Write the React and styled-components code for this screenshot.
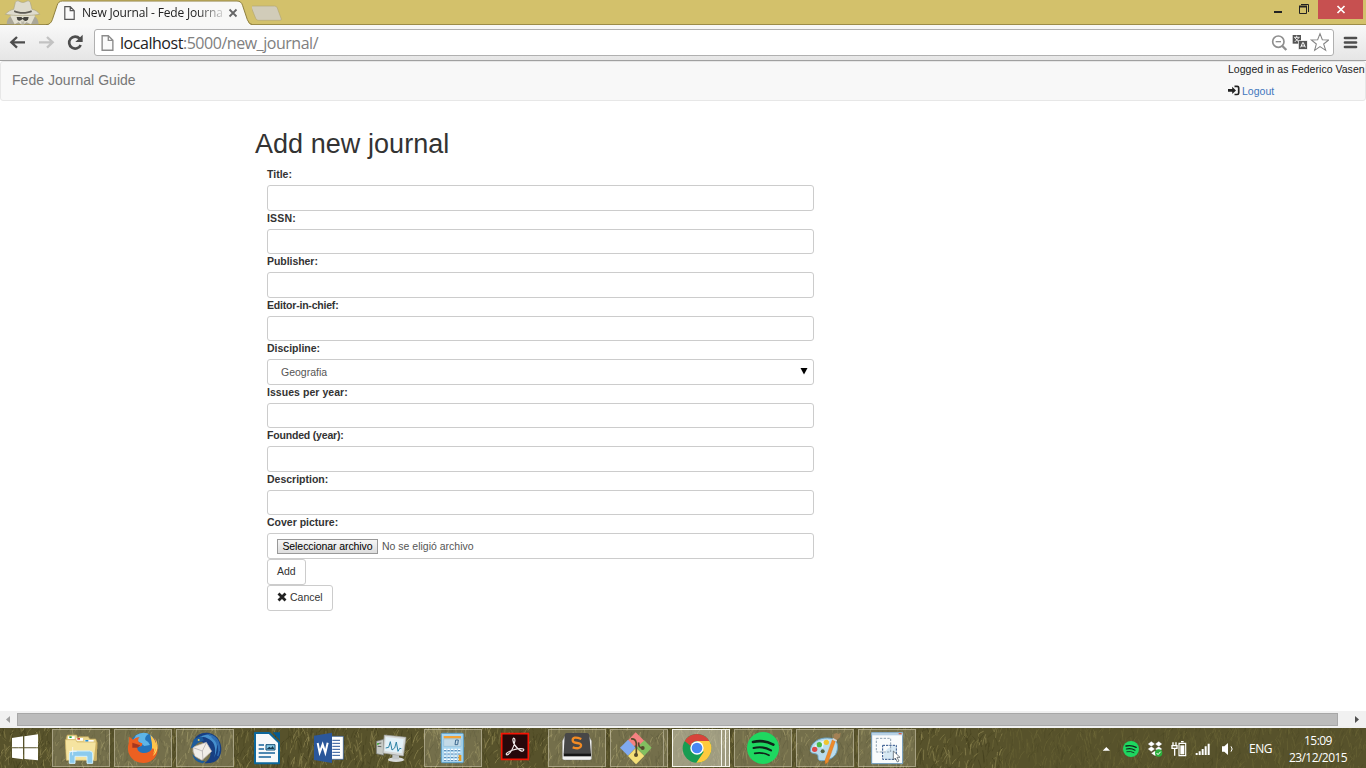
import React from "react";
import styled, { createGlobalStyle } from "styled-components";

const GlobalStyle = createGlobalStyle`
  *, *::before, *::after { box-sizing: border-box; }
  html, body { margin: 0; padding: 0; }
  body { overflow: hidden; background: #fff; }
  svg { display: block; flex: none; }
`;

const UI_FONT = `"Open Sans", "Noto Sans", sans-serif`;

const Desktop = styled.div`
  width: 1366px;
  height: 768px;
  display: flex;
  flex-direction: column;
  overflow: hidden;
  font-family: "Liberation Sans", Arial, sans-serif;
  font-size: 10.5px;
  line-height: 15px;
  color: #333;
`;

/* ---------- browser frame ---------- */

const TabStrip = styled.header`
  height: 25px;
  flex: none;
  display: flex;
  align-items: flex-start;
  background: #d3c16b;
  box-shadow: inset 0 -1px #9c8c48;
`;

const Tab = styled.div`
  position: relative;
  width: 206px;
  height: 25px;
  display: flex;
  align-items: center;
  padding: 1px 0 0 18px;
`;

const TabShape = styled.svg`
  position: absolute;
  left: 0;
  top: 0;
`;

const TabTitle = styled.span`
  position: relative;
  width: 141px;
  margin: 0 5px 0 7px;
  white-space: nowrap;
  font: 12px/18px ${UI_FONT};
  letter-spacing: -0.17px;
  color: #222;
  -webkit-mask-image: linear-gradient(90deg, #000 115px, rgba(0, 0, 0, 0.2) 140px);
  mask-image: linear-gradient(90deg, #000 115px, rgba(0, 0, 0, 0.2) 140px);
`;

const Above = styled.span`
  position: relative;
`;

const WindowButtons = styled.div`
  margin-left: auto;
  display: flex;
`;

const Toolbar = styled.div`
  height: 36px;
  flex: none;
  display: flex;
  align-items: center;
  background: linear-gradient(#f8f8f8, #e6e6e6);
  border-bottom: 1px solid #a0a0a0;
`;

const AddressBar = styled.div`
  width: 1240px;
  height: 27px;
  display: flex;
  align-items: center;
  padding: 0 4px 0 6px;
  background: #fff;
  border: 1px solid #b0b0b0;
  border-radius: 3px;
`;

const Url = styled.span`
  margin-left: 6px;
  flex: 1;
  font: 16px/22px ${UI_FONT};
  letter-spacing: -0.46px;
  color: #808080;
  b { font-weight: 400; color: #222; }
`;

/* ---------- page ---------- */

const Page = styled.main`
  flex: 1;
  background: #fff;
`;

const Navbar = styled.nav`
  height: 40px;
  display: flex;
  justify-content: space-between;
  background: #f8f8f8;
  border: 1px solid #e7e7e7;
  border-radius: 3px;
`;

const Brand = styled.span`
  padding: 10px 0 0 11px;
  font-size: 14px;
  line-height: 16px;
  letter-spacing: 0.04px;
  color: #777;
`;

const Account = styled.div`
  width: 137px;
  white-space: nowrap;
  letter-spacing: 0.03px;
  color: #222;
`;

const Logout = styled.a`
  display: flex;
  align-items: center;
  gap: 2px;
  margin-top: 7px;
  color: #3f76bd;
`;

const LogoutIcon = styled.svg`
  margin-bottom: 2px;
`;

const Content = styled.section`
  width: 559px;
  margin: 28px 0 0 255px;
`;

const Heading = styled.h1`
  margin: 0 0 7px;
  font-size: 27px;
  line-height: 31px;
  font-weight: 400;
  letter-spacing: 0.05px;
  white-space: nowrap;
  color: #333;
`;

const Form = styled.form`
  display: flex;
  flex-direction: column;
  align-items: flex-start;
  padding-left: 12px;
`;

const Field = styled.div`
  width: 547px;
  height: 43.5px;
`;

const Label = styled.label`
  display: block;
  height: 18px;
  font-weight: 700;
  letter-spacing: ${(p) => p.$spacing || 0}px;
`;

const Control = styled.div`
  width: 547px;
  height: 25.5px;
  display: flex;
  align-items: center;
  padding: 1px 5px 0 ${(p) => p.$indent || 9}px;
  background: #fff;
  border: 1px solid #ccc;
  border-radius: 3px;
  color: #555;
`;

const FileButton = styled.span`
  width: 101px;
  height: 15px;
  margin-right: 4px;
  border: 1px solid #999;
  background: linear-gradient(#f6f6f6, #ddd);
  color: #000;
  line-height: 13px;
  letter-spacing: -0.08px;
  text-align: center;
  white-space: nowrap;
`;

const SelectArrow = styled.svg`
  margin-left: auto;
`;

const Button = styled.button`
  width: ${(p) => p.$width}px;
  height: 26px;
  display: flex;
  align-items: center;
  gap: 3px;
  padding: 0 9px;
  border: 1px solid #ccc;
  border-radius: 3px;
  background: #fff;
  font: inherit;
  color: #333;
`;

const ScrollBar = styled.div`
  height: 17px;
  flex: none;
  display: flex;
  align-items: center;
  justify-content: space-between;
  background: #f1f1f1;
`;

const Thumb = styled.div`
  width: 1321px;
  height: 13px;
  background: #bcbcbc;
  border: 1px solid #a8a8a8;
`;

/* ---------- taskbar ---------- */

const Taskbar = styled.footer`
  position: relative;
  height: 40px;
  flex: none;
  display: flex;
  align-items: center;
  background: #57522b;
`;

const GrassArt = styled.svg`
  position: absolute;
  inset: 0;
`;

const Tasks = styled.div`
  position: relative;
  display: flex;
  gap: 4px;
`;

const FRAME = {
  open: "background: rgba(205,200,170,.25); border-color: rgba(215,210,185,.5);",
  active: "background: rgba(220,218,200,.55); border-color: #f4f4ea;",
};

const Task = styled.div`
  position: relative;
  width: 58px;
  height: 38px;
  display: flex;
`;

const TaskFrame = styled.div`
  height: 38px;
  width: ${(p) => p.$width || 58}px;
  flex: none;
  border: 1px solid transparent;
  ${(p) => FRAME[p.$state] || ""}
`;

const StackEdge = styled(TaskFrame)`
  width: ${(p) => p.$width}px;
  border-left: 0;
`;

const TaskIcon = styled.svg`
  position: absolute;
  left: 0;
  top: 0;
`;

const Tray = styled.div`
  position: relative;
  margin-left: auto;
  display: flex;
  align-items: center;
  color: #fff;
  font: 12px/17px ${UI_FONT};
`;

const Language = styled.span`
  width: 37px;
  margin-left: 9px;
  letter-spacing: -0.5px;
`;

const Clock = styled.div`
  width: 64px;
  margin: 1px 16px 0 0;
  text-align: center;
  letter-spacing: -0.55px;
  white-space: nowrap;
`;

/* ---------- drawings ---------- */

const Incognito = () => (
  <svg width="46" height="25" viewBox="0 0 138 75">
    <path d="M20 73c0-12 5-20 12-25l35 8 36-8c8 5 12 13 13 25z" fill="#aaa798" />
    <path d="M31 48l5-13h63l6 13-12 25-14-7-7 7h-9l-7-7-12 7z" fill="#e2dfd0" />
    <path d="M50 51h14l4 4 4-4h14l-2 8c-5 5-12 5-15-1h-3c-4 6-11 5-14 1z" fill="#45443f" />
    <path d="M16 43c8-10 17-13 25-15l5-21c3-6 10-5 14-2 6 3 11 3 17 0 6-4 12-3 14 3l5 20c10 2 18 7 23 15-29 5-75 5-103 0z" fill="#dedbcd" stroke="#aaa584" strokeWidth="2" />
    <path d="M43 31c14 7 38 7 51 0l2 5c-16 7-40 7-54 0z" fill="#5d5b54" />
    <path d="M64 62l4 3 5-3v11h-9z" fill="#bab7a9" />
  </svg>
);

const PageIcon = ({ w = 11, h = 14, c = "#555" }) => (
  <svg width={w} height={h} viewBox="0 0 11 14" fill="#fafafa" stroke={c} strokeWidth="1.2">
    <path d="M.8.7h5.400l4 4v8.600H.8zM6.200.7v4h4" />
  </svg>
);

const NavIcons = () => (
  <svg width="94" height="35" viewBox="0 0 282 105" fill="none" strokeWidth="7">
    <path d="M75 52H35M51 36L34 52l17 16" stroke="#4d4d4d" />
    <path d="M117 52h40M141 36l17 16-17 16" stroke="#c2c2c2" />
    <path d="M239 41A18 18 0 1 0 242 60" stroke="#4d4d4d" strokeWidth="8" />
    <path d="M248 29v22h-22z" fill="#4d4d4d" />
  </svg>
);

const OmniboxIcons = () => (
  <svg width="60" height="25" viewBox="0 0 180 75" fill="none">
    <circle cx="28" cy="35" r="17" stroke="#8f8f8f" strokeWidth="5" />
    <path d="M40 48l12 12" stroke="#8f8f8f" strokeWidth="7" />
    <path d="M20 35h16" stroke="#8f8f8f" strokeWidth="4" />
    <rect x="71" y="15" width="25" height="26" fill="#555" />
    <path d="M75 22h17M83 17v5M78 24l11 12M89 24L77 36" stroke="#fff" strokeWidth="2.6" />
    <rect x="88" y="32" width="27" height="26" fill="#555" stroke="#fff" strokeWidth="2" />
    <path d="M95 52l6-14h2l6 14M97 48h10" stroke="#fff" strokeWidth="3" />
    <path d="M154 12l7 18 19 1-15 12 6 19-17-11-16 11 5-19-15-12 19-1z" transform="translate(-1 -1)" fill="#fff" stroke="#858585" strokeWidth="3.2" />
  </svg>
);

const CaptionButtons = () => (
  <svg width="103" height="19" viewBox="0 0 103 19">
    <path d="M11 12h8" stroke="#222" strokeWidth="2" />
    <path d="M36.500 6.500h7v7h-7zM38 4.500h7.500V12" fill="none" stroke="#222" />
    <path d="M36 6.500h8" stroke="#222" strokeWidth="2" />
    <rect x="55" width="45" height="19" fill="#c75050" />
    <path d="M74.500 6l7 7M81.500 6l-7 7" stroke="#fff" strokeWidth="1.700" />
  </svg>
);

const random = (() => {
  let seed = 90817;
  return () => {
    seed = (seed + 0x6d2b79f5) | 0;
    let t = Math.imul(seed ^ (seed >>> 15), 1 | seed);
    t = (t + Math.imul(t ^ (t >>> 7), 61 | t)) ^ t;
    return ((t ^ (t >>> 14)) >>> 0) / 4294967296;
  };
})();

const blades = Array.from({ length: 3000 }, () => {
  const x = random() * 1380 - 5;
  const y = random() * 50;
  const dim = x > 1000;
  const lean = (random() - 0.4) * 9;
  const len = 3 + random() * 9;
  const tones = dim ? ["#79733f", "#464321", "#6a6434"] : ["#948b55", "#413d1d", "#7d7643", "#4a4621"];
  return {
    d: `M${x.toFixed(1)} ${y.toFixed(1)}q${(lean * 0.2).toFixed(1)} ${(-len / 2).toFixed(1)} ${lean.toFixed(1)} ${(-len).toFixed(1)}`,
    c: tones[Math.floor(random() * tones.length)],
    o: (dim ? 0.4 : 0.45 + random() * 0.4).toFixed(2),
  };
});

const Grass = () => (
  <GrassArt width="1366" height="40" viewBox="0 0 1366 40" fill="none">
    {blades.map((b, i) => (
      <path key={i} d={b.d} stroke={b.c} strokeWidth="0.9" opacity={b.o} />
    ))}
  </GrassArt>
);

const SpotifyWaves = () => (
  <g fill="none" stroke="#10251a" strokeLinecap="round">
    <path d="M459 111q32-8 61 8" strokeWidth="8" />
    <path d="M461 129q28-7 52 7" strokeWidth="6.500" />
    <path d="M464 145q23-5 43 6" strokeWidth="5" />
  </g>
);

const ART = {
  explorer: {
    x: 156,
    art: (
      <>
        <path d="M199 98l3-8h28l3 9 5-4h27l4 7h18l4 11v20H198z" fill="#e8d48a" stroke="#c1a75a" strokeWidth="2" />
        <path d="M204 94h20v8h-20zM229 99h20v8h-20zM254 105h27v8h-27z" fill="#fff" />
        <path d="M208 94h7v5h-7z" fill="#1ea73b" /><path d="M232 99h8v5h-8z" fill="#d24131" /><path d="M256 105h9v5h-9z" fill="#258fcf" />
        <path d="M196 104h31l4 7h58v55h-90z" fill="#f5e4a0" stroke="#d1b768" strokeWidth="2" />
        <path d="M288 109l4 4-3 54h-8z" fill="#cdb163" />
        <path d="M208 175v-28q1-9 10-9h51q9 0 9 9v28h-17v-21h-36v21z" fill="#8ccbed" stroke="#d2f1ff" strokeWidth="3" />
        <path d="M218 126v25M207 139h23" stroke="#fff" strokeWidth="2" />
      </>
    ),
  },
  firefox: {
    x: 342,
    art: (
      <>
        <circle cx="430" cy="125" r="41" fill="#2474bb" />
        <path d="M408 91q19-13 38-4-13 8-10 18 10 4 14 15l-17 3-15-12-19-4z" fill="#5eb5e8" />
        <path d="M451 89c18 15 29 48 10 67-14 12-40 12-50-3 22 7 40-2 44-18 4-17-2-30-4-46z" fill="#ffc54b" />
        <path d="M461 95c22 30 15 77-31 79-32 0-53-28-44-59l2-20 11 9q8-8 20-8-8 8-2 16l10 3-2 8-14 4q2 16 18 17 20 1 29-14 8 2 1 17 12-14 10-31z" fill="#ec6021" />
        <path d="M464 99c9 15 5 40-6 54 16-7 20-37 6-54z" fill="#ffd45a" />
        <path d="M397 113l24 8-8 7-16 0z" fill="#a63720" />
      </>
    ),
  },
  thunderbird: {
    x: 528,
    art: (
      <>
        <path d="M581 111c5-23 29-31 48-26 34 7 44 52 27 75-10 14-27 15-44 15 20-13 24-28 15-47l-21-18z" fill="#173f83" />
        <path d="M588 107q17-17 34-7 31 12 21 58 14-36 3-56-10-16-28-13-18 2-30 18z" fill="#4690cd" />
        <path d="M635 95q31 25 18 58M627 90q34 7 31 48" fill="none" stroke="#2f6eb3" strokeWidth="4" />
        <path d="M579 126l40-14 16 27-29 27-21-12q-8-15-6-28z" fill="#f1ede7" stroke="#bcb4b1" strokeWidth="2" />
        <path d="M580 128l27 10 12-25M607 138l2 27" fill="none" stroke="#a8a3a4" strokeWidth="2" />
        <path d="M572 130l10-28 22-8 8 12-18 8-16 14zM577 146q15 22 39 23l-8 6q-28-5-31-29z" fill="#1e5c9b" />
        <circle cx="596" cy="105" r="3" fill="#dec867" />
      </>
    ),
  },
  writer: {
    x: 714,
    art: (
      <>
        <path d="M765 84h43l29 29v62h-72z" fill="#f7f9fa" stroke="#0d679b" strokeWidth="6" strokeLinejoin="round" />
        <path d="M818 82h22v24z" fill="#075b91" />
        <path d="M776 120h16M776 132h16M776 144h49M776 156h37" stroke="#17639a" strokeWidth="5" />
        <path d="M798 119h27v16h-27z" fill="#83c7e4" stroke="#155078" strokeWidth="3" /><path d="M800 132l8-7 5 4 5-6 5 9z" fill="#153a52" />
      </>
    ),
  },
  word: {
    x: 0,
    art: (
      <>
        <path d="M92 94h38v69H92z" fill="#fff" stroke="#2b579a" strokeWidth="2" />
        <path d="M97 106h23M97 115h23M97 124h23M97 133h23M97 142h23M97 151h23" stroke="#2b579a" strokeWidth="3" />
        <path d="M42 92l54-9v91l-54-9z" fill="#2b579a" />
        <path d="M53 114l6 29 9-25 8 25 7-30" fill="none" stroke="#fff" strokeWidth="6" />
      </>
    ),
  },
  monitor: {
    x: 186,
    art: (
      <>
        <path d="M229 109l22-6v48l-22-5z" fill="#c6c9c5" stroke="#6c706c" strokeWidth="2" />
        <path d="M233 116l11-2M233 124l11 1" stroke="#5e6662" strokeWidth="3" /><path d="M231 117h5" stroke="#41bc30" strokeWidth="4" />
        <ellipse cx="288" cy="164" rx="24" ry="7" fill="#d8dada" />
        <path d="M277 148h20v15h-20z" fill="#c2c6c7" />
        <path d="M253 90l65 7-8 56-61-9z" fill="#d8dad9" stroke="#9ea2a2" strokeWidth="2" />
        <path d="M257 96l54 6-6 43-51-7z" fill="#e3f1f8" />
        <path d="M257 129l9-2 5-17 5 25 8-6 5-18 5 28 5-9 5 1" fill="none" stroke="#2c82a5" strokeWidth="3" />
      </>
    ),
  },
  calculator: {
    x: 372,
    art: (
      <>
        <rect x="424" y="85" width="66" height="88" rx="3" fill="#a9d6f0" stroke="#5b9fca" strokeWidth="3" />
        <path d="M431 93h52v7h-52z" fill="#f2a236" /><path d="M431 102h52v22h-52z" fill="#c4dbe8" stroke="#79a5bc" />
        <path d="M467 105h8l-2 14h-8z" fill="none" stroke="#3d698f" strokeWidth="3" />
        {[135, 145, 155, 165].map((y) => <path key={y} d={`M432 ${y}h50`} stroke="#fff" strokeWidth="7" strokeDasharray="7 3.500" />)}
        {[137, 147, 157, 167].map((y) => <path key={y} d={`M432 ${y}h50`} stroke="#447cae" strokeWidth="3" strokeDasharray="7 3.500" />)}
        <path d="M476 150h8v18h-8z" fill="#e39b26" />
      </>
    ),
  },
  acrobat: {
    x: 558,
    art: (
      <>
        <path d="M605 86h80v77h-80z" fill="#26080a" stroke="#f31505" strokeWidth="5" />
        <path d="M621 150c-8-4 8-12 18-15 15-5 38-7 31 2-6 7-29-14-31-30-2-11 8-10 5 4-2 14-13 37-23 39z" fill="none" stroke="#f1eaea" strokeWidth="3.500" />
      </>
    ),
  },
  sublime: {
    x: 744,
    art: (
      <>
        <path d="M787 108l9-18h69l10 18v52q0 5-5 5h-78q-5 0-5-5z" fill="#f1f1f0" stroke="#666" strokeWidth="1" />
        <path d="M800 84h61q6 0 7 6l5 57H791l3-57q1-6 6-6z" fill="#474747" />
        <path d="M791 146h82v8h-82z" fill="#161616" />
        <path d="M844 102q-26-10-26 4 0 7 13 8 14 1 12 9-3 11-25 4" fill="none" stroke="#f28b24" strokeWidth="7" />
      </>
    ),
  },
  git: {
    x: 30,
    art: (
      <>
        <path d="M84 106l23-24 27 27-20 20-8-9-10 10-16-16z" fill="#f48181" />
        <path d="M60 128l24-24 23 24-23 24z" fill="#80aaf0" />
        <path d="M133 106l22 22-22 24-24-24z" fill="#82be60" />
        <path d="M84 153l24-25 25 25-25 25z" fill="#f4df77" />
        <path d="M93 102q14-2 16 13v34M116 112q-1 17 11 17" fill="none" stroke="#54482c" strokeWidth="5" />
        <circle cx="108" cy="150" r="6" fill="#54482c" /><circle cx="128" cy="129" r="6" fill="#54482c" />
      </>
    ),
  },
  chrome: {
    x: 216,
    art: (
      <>
        <circle cx="291" cy="130" r="43" fill="#179c52" />
        <path d="M291 108h37a43 43 0 0 1-39 65l22-32z" fill="#ffca3e" />
        <path d="M254 108a43 43 0 0 1 74 0h-37q-15 1-19 15z" fill="#d7443a" />
        <circle cx="291" cy="129" r="20" fill="#fff" /><circle cx="291" cy="129" r="16" fill="#4687f4" />
      </>
    ),
  },
  spotify: {
    x: 402,
    art: <><circle cx="489" cy="129" r="48" fill="#1ed760" /><SpotifyWaves /></>,
  },
  paint: {
    x: 588,
    art: (
      <>
        <path d="M632 130c5-20 28-32 50-31 28 0 32 16 30 34-3 24-26 35-49 34-16-1-3-16-14-20-13-3-21-2-17-17z" fill="#b9dced" stroke="#6aa2c4" strokeWidth="3" />
        <path d="M641 126q16-22 50-21-26 10-21 24-19-7-29-3z" fill="#e6f6fd" />
        <circle cx="644" cy="133" r="8" fill="#dc4b47" /><circle cx="658" cy="119" r="8" fill="#4cb949" /><circle cx="679" cy="112" r="8" fill="#f0c62f" /><circle cx="668" cy="139" r="6" fill="#566341" />
        <path d="M697 104l9 5-22 63-8 5-1-11z" fill="#ed8a2b" stroke="#c96b1b" />
        <path d="M700 103l1-16 9-3 5 3 7-4-2 14-10 9z" fill="#a48155" /><path d="M698 101l12 7" stroke="#d7d9d8" strokeWidth="5" />
      </>
    ),
  },
  snip: {
    x: 774,
    art: (
      <>
        <path d="M815 83h93v93h-93z" fill="#f9fbfc" stroke="#6e99bd" strokeWidth="3" />
        <path d="M815 83h93v8h-93z" fill="#b7d1e5" /><path d="M896 86h9" stroke="#d8614b" strokeWidth="4" />
        <path d="M850 162q-1-32 37-41v42z" fill="#d6e8f3" />
        <path d="M829 100h43v41h-43z" fill="none" stroke="#8fa2b3" strokeWidth="3" strokeDasharray="7 4" />
        <path d="M848 121h41v42h-41z" fill="none" stroke="#294f87" strokeWidth="3" strokeDasharray="7 3" />
        <path d="M880 138v27l6-6 6 12 5-3-6-11h9z" fill="#fff" stroke="#3e4852" strokeWidth="2" />
      </>
    ),
  },
};

const TASKS = [
  ["explorer", "open"], ["firefox", "open"], ["thunderbird", "open"], ["writer"], ["word"], ["monitor"],
  ["calculator", "open"], ["acrobat"], ["sublime", "open"], ["git", "open", [54, 4]],
  ["chrome", "active", [50, 4, 4]], ["spotify", "open"], ["paint", "open"], ["snip", "open"],
];

const TaskButton = ({ name, state, widths = [58] }) => (
  <Task>
    <TaskFrame $state={state} $width={widths[0]} />
    {widths.slice(1).map((w, i) => <StackEdge key={i} $state={state} $width={w} />)}
    <TaskIcon width="58" height="38" viewBox={`${ART[name].x} 72 174 114`}>{ART[name].art}</TaskIcon>
  </Task>
);

const StartLogo = () => (
  <svg width="52" height="40" viewBox="0 69 156 120">
    <path d="M36 99l33-5v33H36zM73 94l41-6v39H73zM36 130h33v33l-33-5zM73 130h41v36l-41-4z" fill="#fff" />
  </svg>
);

const TrayIcons = () => (
  <svg width="140" height="40" viewBox="60 69 420 120">
    <path d="M68 137l11-11 11 11z" fill="#fff" />
    <circle cx="153" cy="132" r="24" fill="#1ed760" />
    <g transform="translate(-91.500 67.500) scale(.5)"><SpotifyWaves /></g>
    <path d="M203 117l11-8 11 8-11 8zM225 117l11-8 11 8-11 8zM203 132l11-8 11 8-11 8zM225 132l11-8 11 8-11 8zM213 145l12-8 12 8-12 8z" fill="#fff" stroke="#38351e" strokeWidth="1" />
    <circle cx="236" cy="144" r="11" fill="#2caf3d" /><path d="M230 144l4 5 8-9" fill="none" stroke="#fff" strokeWidth="3" />
    <path d="M297 115h20v37h-20zM303 110h8" fill="none" stroke="#fff" strokeWidth="3.500" /><path d="M301 121h12v27h-12z" fill="#fff" />
    <path d="M279 112v8M288 112v8M276 122h15v8h-15zM284 130v22" fill="none" stroke="#fff" strokeWidth="4" />
    <path d="M350 150v-6M359 150v-11M368 150v-18M377 150v-26M386 150v-34" stroke="#fff" strokeWidth="6" />
    <path d="M426 124h7l11-10v36l-11-10h-7z" fill="#fff" /><path d="M453 124q7 8 0 16" fill="none" stroke="#fff" strokeWidth="3" />
  </svg>
);

const FIELDS = [
  { label: "Title:" }, { label: "ISSN:", spacing: 0.2 }, { label: "Publisher:", spacing: -0.05 },
  { label: "Editor-in-chief:", spacing: -0.2 }, { label: "Discipline:", kind: "select" }, { label: "Issues per year:", spacing: 0.05 },
  { label: "Founded (year):", spacing: -0.18 }, { label: "Description:" }, { label: "Cover picture:", kind: "file" },
];

const FormField = ({ label, kind, spacing }) => (
  <Field>
    <Label $spacing={spacing}>{label}</Label>
    <Control $indent={kind === "select" ? 13 : 9}>
      {kind === "select" && (
        <>
          Geografia
          <SelectArrow width="8" height="10" viewBox="0 0 8 10"><path d="M.5 1h7L4 7.500z" /></SelectArrow>
        </>
      )}
      {kind === "file" && (
        <>
          <FileButton>Seleccionar archivo</FileButton>No se eligió archivo
        </>
      )}
    </Control>
  </Field>
);

export default function App() {
  return (
    <Desktop>
      <GlobalStyle />
      <TabStrip>
        <Incognito />
        <Tab>
          <TabShape width="206" height="25" viewBox="138 0 618 75">
            <path d="M138 75q14-1 19-16l14-42q4-14 16-14h524q13 0 17 14l14 42q5 16 16 16z" fill="#f8f8f7" />
            <path d="M138 74q14 0 19-15l14-42q4-14 16-14h524q13 0 17 14l14 42q5 15 16 15" fill="none" stroke="#8e7f3e" strokeWidth="3" />
          </TabShape>
          <Above><PageIcon w={11} h={14} /></Above>
          <TabTitle>New Journal - Fede Journa</TabTitle>
          <Above>
            <svg width="10" height="10" viewBox="0 0 10 10"><path d="M1.500 1.500l7 7M8.500 1.500l-7 7" stroke="#666" strokeWidth="1.800" /></svg>
          </Above>
        </Tab>
        <svg width="32" height="25" viewBox="753 0 96 75">
          <path d="M751 18h70q6 0 8 6l12 33q1 4-4 4h-65q-6 0-8-6l-13-32q-2-5 2-5z" fill="#d1ccb9" stroke="#b4a873" strokeWidth="2" />
        </svg>
        <WindowButtons><CaptionButtons /></WindowButtons>
      </TabStrip>
      <Toolbar>
        <NavIcons />
        <AddressBar>
          <PageIcon w={13} h={16} c="#8b8b8b" />
          <Url><b>localhost</b>:5000/new_journal/</Url>
          <OmniboxIcons />
        </AddressBar>
        <svg width="32" height="35" viewBox="0 0 32 35">
          <path d="M11 13h11M11 17.500h11M11 22h11" stroke="#4d4d4d" strokeWidth="2.700" strokeLinecap="round" />
        </svg>
      </Toolbar>
      <Page>
        <Navbar>
          <Brand>Fede Journal Guide</Brand>
          <Account>
            Logged in as Federico Vasen
            <Logout>
              <LogoutIcon width="12" height="11" viewBox="0 0 12 11">
                <path d="M6.500 1.300h2.700q1.500 0 1.500 1.500v5.200q0 1.500-1.500 1.500H6.500" fill="none" stroke="#222" strokeWidth="1.700" />
                <path d="M0 4h4.200V1.700L8 5.400 4.200 9V6.800H0z" fill="#222" />
              </LogoutIcon>
              Logout
            </Logout>
          </Account>
        </Navbar>
        <Content>
          <Heading>Add new journal</Heading>
          <Form onSubmit={(e) => e.preventDefault()}>
            {FIELDS.map((f) => <FormField key={f.label} {...f} />)}
            <Button type="button" $width={39}>Add</Button>
            <Button type="button" $width={66}>
              <svg width="10" height="12" viewBox="0 0 10 12"><path d="M1.500 1.500l7 7M8.500 1.500l-7 7" stroke="#222" strokeWidth="2.800" /></svg>
              Cancel
            </Button>
          </Form>
        </Content>
      </Page>
      <ScrollBar>
        <svg width="17" height="17" viewBox="0 0 17 17"><path d="M10 5v7L6 8.500z" fill="#a0a0a0" /></svg>
        <Thumb />
        <svg width="28" height="17" viewBox="0 0 28 17"><path d="M17 5v7l4-3.500z" fill="#505050" /></svg>
      </ScrollBar>
      <Taskbar>
        <Grass />
        <Above><StartLogo /></Above>
        <Tasks>
          {TASKS.map(([name, state, widths]) => <TaskButton key={name} name={name} state={state} widths={widths} />)}
        </Tasks>
        <Tray>
          <TrayIcons />
          <Language>ENG</Language>
          <Clock>15:09<br />23/12/2015</Clock>
        </Tray>
      </Taskbar>
    </Desktop>
  );
}
